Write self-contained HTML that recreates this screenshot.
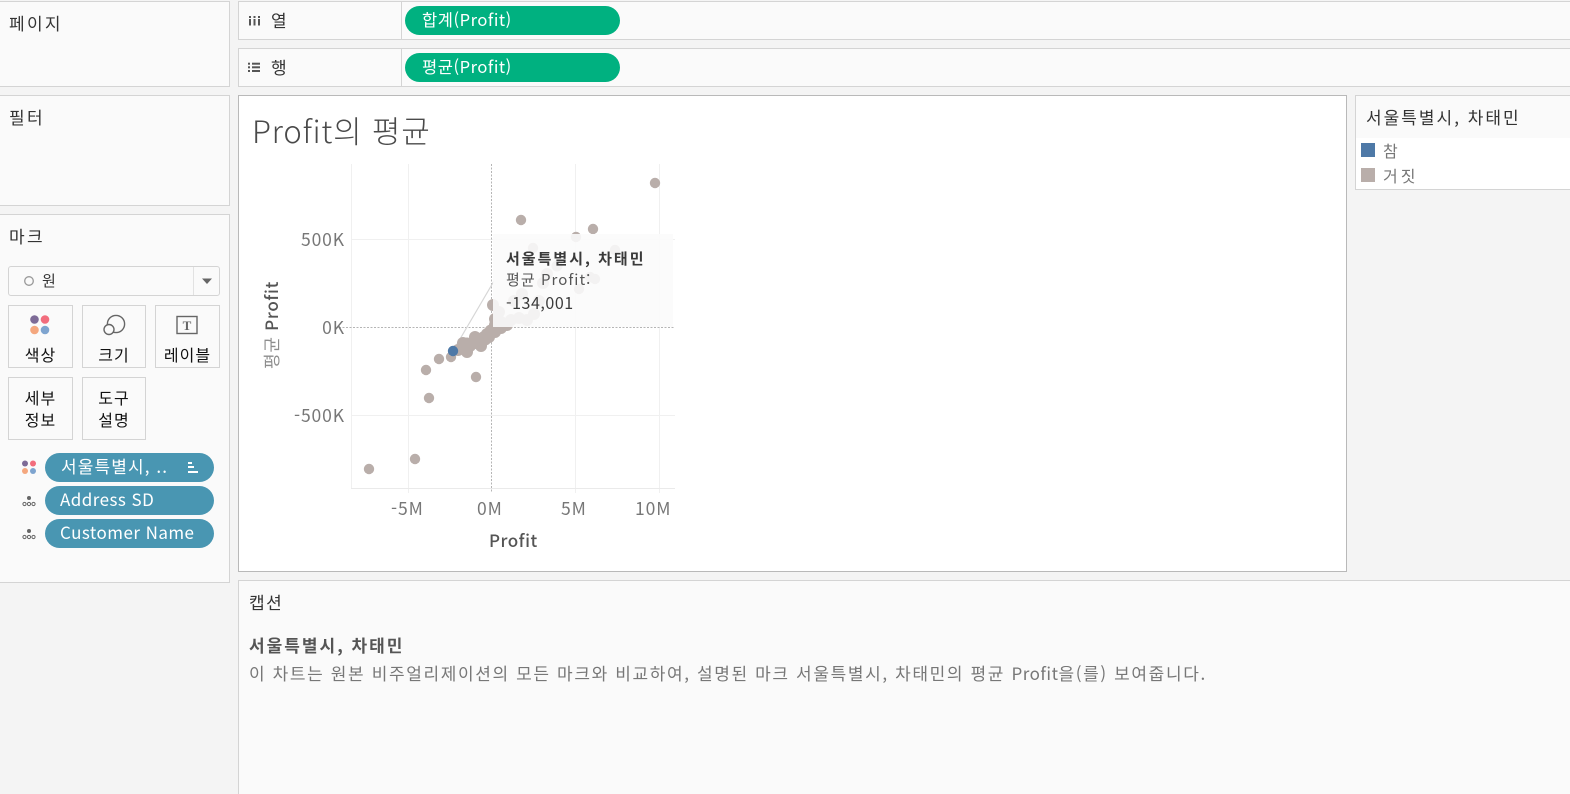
<!DOCTYPE html>
<html lang="ko"><head><meta charset="utf-8"><title>Tableau</title>
<style>
html,body{margin:0;padding:0;width:1570px;height:794px;overflow:hidden;background:#f4f4f4}
body{position:relative;font-family:"Liberation Sans","Noto Sans CJK KR",sans-serif;color:#333}
.a{position:absolute;box-sizing:border-box}
.p{background:#fafafa;border:1px solid #d4d4d4}
.t{position:absolute;white-space:nowrap;line-height:1}
.k{font-family:"Noto Sans CJK KR",sans-serif}
.pill{position:absolute;box-sizing:border-box;border-radius:15px;color:#fff;white-space:nowrap;font-family:"Noto Sans CJK KR",sans-serif}
.g{background:#00b180;left:405px;width:215px;height:29px;font-size:16.5px;line-height:26px;padding-left:17px;letter-spacing:.55px}
.b{background:#4996b2;left:45px;width:169px;height:29px;font-size:17px;line-height:26px;padding-left:15px;letter-spacing:.45px}
.btn{position:absolute;box-sizing:border-box;border:1px solid #d4d4d4;background:#fafafa;text-align:center;font-size:16px;letter-spacing:1px;color:#111;font-family:"Noto Sans CJK KR",sans-serif}
.ax{font-size:17.5px;letter-spacing:.9px;color:#777}
.h{font-size:17px;letter-spacing:2.300px;color:#333}
</style></head><body>

<div class="a p" style="left:-1px;top:1px;width:231px;height:86px"></div>
<div class="t k h" style="left:9px;top:14px">페이지</div>
<div class="a p" style="left:-1px;top:95px;width:231px;height:111px"></div>
<div class="t k h" style="left:9px;top:108px">필터</div>
<div class="a p" style="left:-1px;top:214px;width:231px;height:369px"></div>
<div class="t k h" style="left:9px;top:227px">마크</div>

<div class="a" style="left:8px;top:266px;width:212px;height:30px;border:1px solid #d4d4d4;border-radius:3px;background:#fafafa"></div>
<div class="a" style="left:193px;top:267px;width:1px;height:28px;background:#e2e2e2"></div>
<svg class="a" style="left:0;top:260px" width="230" height="40"><polygon points="202,18.500 212,18.500 207,24" fill="#666"/><circle cx="29" cy="21" r="4.300" fill="none" stroke="#999" stroke-width="1.300"/></svg>
<div class="t k" style="left:42px;top:273px;font-size:15px;color:#333">원</div>

<div class="btn" style="left:8px;top:305px;width:65px;height:63px;padding-top:38px;line-height:20px">색상</div>
<div class="btn" style="left:82px;top:305px;width:64px;height:63px;padding-top:38px;line-height:20px">크기</div>
<div class="btn" style="left:155px;top:305px;width:65px;height:63px;padding-top:38px;line-height:20px">레이블</div>
<div class="btn" style="left:8px;top:377px;width:65px;height:63px;padding-top:8px;line-height:22px">세부<br>정보</div>
<div class="btn" style="left:82px;top:377px;width:64px;height:63px;padding-top:8px;line-height:22px">도구<br>설명</div>

<svg class="a" style="left:0;top:300px" width="230" height="60">
<circle cx="34.500" cy="19.500" r="4.300" fill="#7d6b97"/><circle cx="45" cy="19.500" r="4.300" fill="#f26d7d"/><circle cx="34.500" cy="30" r="4.300" fill="#f4a77e"/><circle cx="45" cy="30" r="4.300" fill="#7ea4cf"/>
<circle cx="116" cy="24" r="8.600" fill="none" stroke="#666" stroke-width="1.400"/><circle cx="109" cy="29.500" r="5" fill="#fafafa" stroke="#666" stroke-width="1.400"/>
<rect x="177" y="16.500" width="20" height="17" fill="none" stroke="#666" stroke-width="1.400"/>
<text x="187" y="30" text-anchor="middle" font-family="Liberation Serif" font-weight="bold" font-size="13" fill="#666">T</text>
</svg>

<svg class="a" style="left:0;top:450px" width="44" height="100">
<circle cx="25" cy="13.500" r="3" fill="#7d6b97"/><circle cx="33" cy="13.500" r="3" fill="#f26d7d"/><circle cx="25" cy="21" r="3" fill="#f4a77e"/><circle cx="33" cy="21" r="3" fill="#7ea4cf"/>
<g fill="none" stroke="#666"><circle cx="24.500" cy="54" r="1.600"/><circle cx="29" cy="54" r="1.600"/><circle cx="33.500" cy="54" r="1.600"/><circle cx="24.500" cy="87" r="1.600"/><circle cx="29" cy="87" r="1.600"/><circle cx="33.500" cy="87" r="1.600"/></g>
<circle cx="29" cy="48" r="2" fill="#666"/><circle cx="29" cy="81" r="2" fill="#666"/>
</svg>
<div class="pill b" style="top:453px;letter-spacing:1.100px;padding-left:16px">서울특별시, ..</div>
<svg class="a" style="left:186px;top:460px" width="16" height="16"><g fill="#fff"><rect x="2" y="2" width="4" height="2"/><rect x="2" y="6" width="6" height="2"/><rect x="2" y="11" width="10" height="2"/></g></svg>
<div class="pill b" style="top:486px">Address SD</div>
<div class="pill b" style="top:519px">Customer Name</div>

<div class="a p" style="left:238px;top:1px;width:1340px;height:39px"></div>
<div class="a" style="left:401px;top:1px;width:1px;height:39px;background:#d4d4d4"></div>
<div class="a p" style="left:238px;top:48px;width:1340px;height:39px"></div>
<div class="a" style="left:401px;top:48px;width:1px;height:39px;background:#d4d4d4"></div>
<svg class="a" style="left:245px;top:10px" width="20" height="66"><g fill="#555"><rect x="4" y="9" width="2" height="6.500"/><rect x="4" y="6" width="2" height="2"/><rect x="8.500" y="9" width="2" height="6.500"/><rect x="8.500" y="6" width="2" height="2"/><rect x="13" y="9" width="2" height="6.500"/><rect x="13" y="6" width="2" height="2"/>
<rect x="3" y="52.700" width="2" height="2"/><rect x="7" y="52.700" width="8" height="2"/><rect x="3" y="56.300" width="2" height="2"/><rect x="7" y="56.300" width="8" height="2"/><rect x="3" y="60" width="2" height="2"/><rect x="7" y="60" width="8" height="2"/></g></svg>
<div class="t k" style="left:271px;top:11px;font-size:17px;color:#333">열</div>
<div class="t k" style="left:271px;top:58px;font-size:17px;color:#333">행</div>
<div class="pill g" style="top:6px">합계(Profit)</div>
<div class="pill g" style="top:53px">평균(Profit)</div>

<div class="a" style="left:238px;top:95px;width:1109px;height:477px;background:#fff;border:1px solid #b9b9b9"></div>
<div class="t k" style="left:252px;top:114px;font-size:31px;letter-spacing:.8px;color:#4a4a4a;font-weight:300">Profit의 평균</div>

<svg class="a" style="left:239px;top:96px" width="460" height="470">
<g stroke="#f0f0f0" fill="none">
<path d="M112.500 68V392M169.500 68V397M336.500 68V397M420.500 68V397M112 143.500H436M112 319.500H436"/>
<path d="M112 392.500H436" stroke="#eaeaea"/>
</g>
<g stroke="#b5b5b5" stroke-dasharray="2 1.500" fill="none"><path d="M252.500 68V397M100 231.500H436"/></g>
<path d="M214 255L255 185" stroke="#d6d6d6" stroke-width="1.200" fill="none"/>
<g fill="#b9aeaa">
<circle cx="416" cy="87" r="5.200"/><circle cx="282" cy="124" r="5.200"/><circle cx="354" cy="133" r="5.200"/><circle cx="337" cy="141" r="5.200"/>
<circle cx="187" cy="274" r="5.200"/><circle cx="200" cy="263" r="5.200"/><circle cx="212" cy="261" r="5.200"/><circle cx="237" cy="281" r="5.200"/>
<circle cx="130" cy="373" r="5.200"/><circle cx="176" cy="363" r="5.200"/><circle cx="190" cy="302" r="5.200"/>
<circle cx="219" cy="254" r="6"/><circle cx="225" cy="251" r="6"/><circle cx="231" cy="250" r="6"/><circle cx="228" cy="256" r="6"/><circle cx="236" cy="247" r="6"/><circle cx="243" cy="245" r="6"/><circle cx="236" cy="241" r="6"/><circle cx="245" cy="241" r="6"/><circle cx="242" cy="250" r="6"/><circle cx="250" cy="241" r="6"/><circle cx="256" cy="236" r="6"/><circle cx="262" cy="232" r="6"/><circle cx="268" cy="229" r="6"/><circle cx="256" cy="229" r="6"/><circle cx="256" cy="223" r="6"/><circle cx="260" cy="216" r="6"/><circle cx="254" cy="209" r="6"/><circle cx="272" cy="224" r="6"/><circle cx="280" cy="222" r="6"/><circle cx="288" cy="224" r="6"/><circle cx="295" cy="218" r="6"/><circle cx="275" cy="205" r="6"/><circle cx="283" cy="198" r="6"/><circle cx="300" cy="205" r="6"/><circle cx="304" cy="187" r="6"/><circle cx="308" cy="178" r="6"/><circle cx="318" cy="170" r="5.500"/><circle cx="340" cy="193" r="5.200"/><circle cx="356" cy="183" r="5.200"/><circle cx="351" cy="181" r="5.200"/><circle cx="294" cy="152" r="5.200"/><circle cx="376" cy="154" r="5.200"/>
<circle cx="224" cy="247" r="6"/><circle cx="234" cy="247" r="6"/><circle cx="238" cy="243" r="6.500"/><circle cx="246" cy="243" r="6.500"/><circle cx="248" cy="238" r="6"/><circle cx="252" cy="235" r="6.500"/><circle cx="228" cy="248" r="6.500"/><circle cx="262" cy="226" r="6"/>
</g>
<circle cx="214" cy="255" r="5.200" fill="#4e79a7"/>
<rect x="254" y="138" width="180" height="93" fill="#fafafa" fill-opacity=".89"/>
</svg>

<div class="t k" style="left:506px;top:251px;font-size:15px;letter-spacing:2px;font-weight:700;color:#3a3a3a">서울특별시, 차태민</div>
<div class="t k" style="left:506px;top:272px;font-size:15px;letter-spacing:1.050px;color:#555">평균 Profit:</div>
<div class="t k" style="left:506px;top:294px;font-size:16px;letter-spacing:.55px;color:#3a3a3a">-134,001</div>

<div class="t k ax" style="right:1225px;top:231px">500K</div>
<div class="t k ax" style="right:1225px;top:319px">0K</div>
<div class="t k ax" style="right:1225px;top:407px">-500K</div>
<div class="t k ax" style="left:391px;top:500px">-5M</div>
<div class="t k ax" style="left:477px;top:500px">0M</div>
<div class="t k ax" style="left:561px;top:500px">5M</div>
<div class="t k ax" style="left:635px;top:500px">10M</div>
<div class="t k" style="left:489px;top:531px;font-size:17px;letter-spacing:.5px;color:#555;font-weight:500">Profit</div>
<div class="t k" style="left:262px;top:369px;font-size:17px;letter-spacing:.7px;color:#555;font-weight:500;transform-origin:0 0;transform:rotate(-90deg)"><span style="color:#8d8d8d;font-weight:400">평균</span> Profit</div>

<div class="a p" style="left:1355px;top:95px;width:225px;height:95px;background:#fff"></div>
<div class="a" style="left:1356px;top:96px;width:216px;height:42px;background:#fafafa"></div>
<div class="t k" style="left:1366px;top:108px;font-size:17px;letter-spacing:2px;color:#333">서울특별시, 차태민</div>
<div class="a" style="left:1361px;top:143px;width:14px;height:14px;background:#4e79a7"></div>
<div class="a" style="left:1361px;top:168px;width:14px;height:14px;background:#b9aeaa"></div>
<div class="t k" style="left:1383px;top:142px;font-size:16px;letter-spacing:3px;color:#777">참</div>
<div class="t k" style="left:1383px;top:167px;font-size:16px;letter-spacing:3px;color:#777">거짓</div>

<div class="a p" style="left:238px;top:580px;width:1340px;height:220px"></div>
<div class="t k" style="left:249px;top:593px;font-size:17px;letter-spacing:1.500px;color:#333">캡션</div>
<div class="t k" style="left:249px;top:636px;font-size:17px;letter-spacing:2px;font-weight:700;color:#555">서울특별시, 차태민</div>
<div class="t k" style="left:249px;top:664px;font-size:17px;letter-spacing:1.620px;color:#777">이 차트는 원본 비주얼리제이션의 모든 마크와 비교하여, 설명된 마크 서울특별시, 차태민의 평균 <span style="letter-spacing:.5px">Profit</span>을(를) 보여줍니다.</div>

</body></html>
